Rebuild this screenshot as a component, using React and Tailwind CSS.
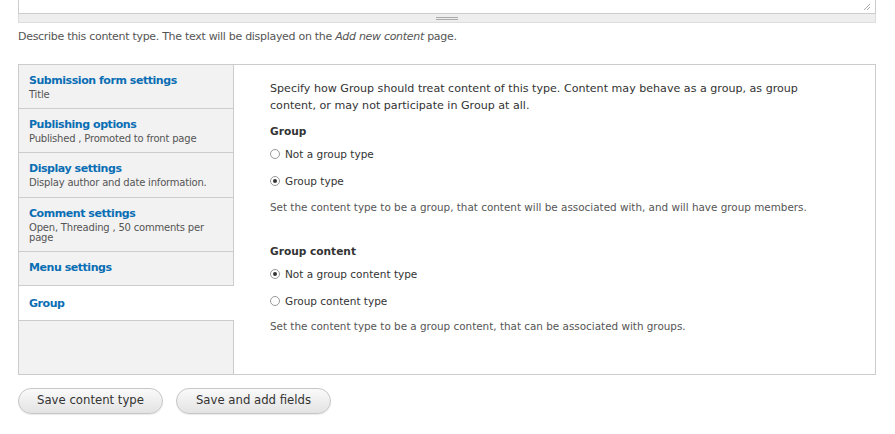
import React, { useState } from 'react';

const tabs = [
  { title: 'Submission form settings', summary: 'Title', h: 'h-[44px]' },
  { title: 'Publishing options', summary: 'Published , Promoted to front page', h: 'h-[44px]' },
  { title: 'Display settings', summary: 'Display author and date information.', h: 'h-[45px]' },
  { title: 'Comment settings', summary: 'Open, Threading , 50 comments per page', h: 'h-[54px]' },
  { title: 'Menu settings', summary: '', h: 'h-[34px]' },
  { title: 'Group', summary: '', h: 'h-[35px]' },
];

function Radio({ checked, label }) {
  return (
    <label className="flex items-center gap-[5px] text-[10.5px] text-[#333] leading-none">
      <span className="w-[10px] h-[10px] rounded-full border border-[#999] bg-white flex items-center justify-center">
        {checked && <span className="w-[4px] h-[4px] rounded-full bg-[#333]" />}
      </span>
      {label}
    </label>
  );
}

export default function App() {
  const [active] = useState(5);

  return (
    <div className="w-[895px] h-[434px] bg-white overflow-hidden font-['DejaVu_Sans',sans-serif] text-[#333]">
      <div className="pl-[18px] pr-[19px]">
        {/* textarea bottom + grippie */}
        <div className="border border-t-0 border-[#ccc] h-[14px] bg-white relative">
          <svg className="absolute right-[4px] bottom-[2px]" width="8" height="8" viewBox="0 0 8 8">
            <path d="M7 1 L1 7 M7 4 L4 7" stroke="#aaa" strokeWidth="1" />
          </svg>
        </div>
        <div className="h-[9px] bg-[#eee] border border-t-0 border-[#ddd] flex items-center justify-center">
          <div className="w-[22px] h-[3px] border-y border-[#aaa]" />
        </div>
        <p className="mt-[7px] text-[11px] text-[#555] leading-[14px] tracking-[-0.3px]">
          Describe this content type. The text will be displayed on the <em>Add new content</em> page.
        </p>

        {/* vertical tabs */}
        <div className="mt-[20px] flex border border-[#ccc] h-[311px]">
          <ul className="w-[215px] bg-[#f2f2f2] border-r border-[#ccc] flex flex-col shrink-0">
            {tabs.map((t, i) => (
              <li
                key={t.title}
                className={`${t.h} px-[10px] border-b border-[#ccc] ${
                  i === active ? 'bg-white -mr-[1px] pt-[10px]' : 'pt-[8px]'
                }`}
              >
                <div className="text-[11px] font-bold text-[#0a6eb4] leading-[16px] tracking-[-0.45px]">{t.title}</div>
                {t.summary && (
                  <div className="text-[10px] text-[#555] leading-[10px] mt-[1px] tracking-[-0.2px]">{t.summary}</div>
                )}
              </li>
            ))}
          </ul>

          <div className="flex-1 pl-[36px] pt-[15px] pr-[20px]">
            <p className="text-[11.1px] leading-[17px] max-w-[548px]">
              Specify how Group should treat content of this type. Content may behave as a group, as group
              content, or may not participate in Group at all.
            </p>
            <h3 className="mt-[10px] text-[10.6px] font-bold leading-[15px]">Group</h3>
            <div className="mt-[10px] flex flex-col gap-[16px]">
              <Radio label="Not a group type" />
              <Radio checked label="Group type" />
            </div>
            <p className="mt-[14px] text-[10.4px] text-[#555] leading-[14px]">
              Set the content type to be a group, that content will be associated with, and will have group members.
            </p>

            <h3 className="mt-[30px] text-[10.6px] font-bold leading-[15px]">Group content</h3>
            <div className="mt-[10px] flex flex-col gap-[16px]">
              <Radio checked label="Not a group content type" />
              <Radio label="Group content type" />
            </div>
            <p className="mt-[13px] text-[10.4px] text-[#555] leading-[14px]">
              Set the content type to be a group content, that can be associated with groups.
            </p>
          </div>
        </div>

        {/* actions */}
        <div className="mt-[13px] flex gap-[13px]">
          <button className="h-[26px] w-[145px] rounded-full border border-[#c6c6c6] bg-gradient-to-b from-[#fafafa] to-[#e3e3e3] text-[11.7px] text-[#333] shadow-[0_1px_1px_rgba(0,0,0,0.08)]">
            Save content type
          </button>
          <button className="h-[26px] w-[155px] rounded-full border border-[#c6c6c6] bg-gradient-to-b from-[#fafafa] to-[#e3e3e3] text-[11.7px] text-[#333] shadow-[0_1px_1px_rgba(0,0,0,0.08)]">
            Save and add fields
          </button>
        </div>
      </div>
    </div>
  );
}
